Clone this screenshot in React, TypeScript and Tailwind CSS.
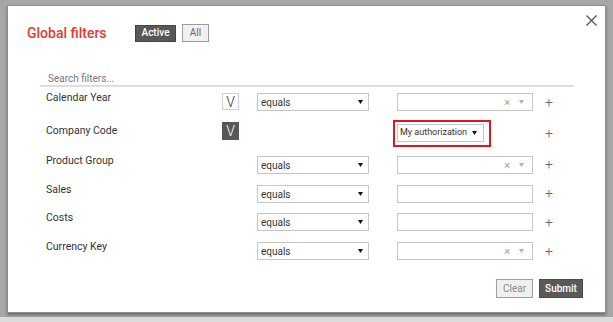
import React from 'react'

/**
 * Global filters dialog
 * Modal with a filter search box, one row per dimension and footer actions
 */

type Row = {
  label: string
  checkbox?: 'light' | 'dark'
  op: boolean
  value: 'combo' | 'text' | 'auth'
  height: string
  plusTop: string
}

const rows: Row[] = [
  { label: 'Calendar Year', checkbox: 'light', op: true, value: 'combo', height: 'h-[27px]', plusTop: 'mt-[2px]' },
  { label: 'Company Code', checkbox: 'dark', op: false, value: 'auth', height: 'h-[36px]', plusTop: 'mt-[6px]' },
  { label: 'Product Group', op: true, value: 'combo', height: 'h-[29px]', plusTop: 'mt-[1px]' },
  { label: 'Sales', op: true, value: 'text', height: 'h-[28px]', plusTop: 'mt-[1px]' },
  { label: 'Costs', op: true, value: 'text', height: 'h-[29px]', plusTop: 'mt-[2px]' },
  { label: 'Currency Key', op: true, value: 'combo', height: 'h-[18px]', plusTop: 'mt-[2px]' },
]

function Caret({ className }: { className?: string }) {
  return (
    <svg width="5" height="4" viewBox="0 0 5 4" className={className}>
      <path d="M0 0h5L2.5 4z" fill="currentColor" />
    </svg>
  )
}

function OpSelect() {
  return (
    <div className="w-[112px] h-[18px] border border-[#c6c6c6] bg-white flex items-center pl-[3px] pr-[5px]">
      <span className="text-[10px] text-[#333] flex-1">equals</span>
      <Caret className="text-[#111]" />
    </div>
  )
}

function ValueBox({ kind }: { kind: Row['value'] }) {
  if (kind === 'auth') {
    return (
      <div className="-ml-[4px] w-[98px] h-[27px] border-2 border-[#e3161b] pl-[2px] pt-[2px]">
        <div className="w-[87px] h-[18px] border border-[#c6c6c6] bg-white flex items-center pl-[2px] pr-[6px]">
          <span className="text-[9px] text-[#333] flex-1 whitespace-nowrap">My authorization</span>
          <Caret className="text-[#111]" />
        </div>
      </div>
    )
  }
  return (
    <div className="w-[136px] h-[18px] border border-[#c6c6c6] bg-white flex items-center justify-end pr-[8px] gap-[9px]">
      {kind === 'combo' && (
        <>
          <span className="text-[11px] leading-none text-[#a0a0a0]">×</span>
          <Caret className="text-[#b0b0b0]" />
        </>
      )}
    </div>
  )
}

export default function App() {
  return (
    <div className="w-[613px] h-[322px] flex flex-col bg-[#dcdcdc] font-['Roboto','Liberation_Sans',sans-serif]">
      <div className="bg-[#a7a7a7] pt-[5px] pl-[7px] pr-[7px] pb-[4px]">
        <div className="relative h-[308px] bg-white border border-[#8e8e8e] shadow-[0_2px_3px_rgba(0,0,0,0.35)]">
          {/* Close */}
          <svg width="11" height="11" viewBox="0 0 11 11" className="absolute top-[9px] right-[8px] text-[#555]">
            <path d="M0.5 0.5l10 10M10.5 0.5l-10 10" stroke="currentColor" strokeWidth="1.3" />
          </svg>

          {/* Header */}
          <div className="flex items-center mt-[18px] pl-[19px] h-[18px]">
            <h1 className="w-[108px] text-[14px] leading-[18px] font-medium text-[#e8392f]">Global filters</h1>
            <button className="w-[41px] h-[17px] bg-[#585858] border border-[#444] text-white text-[10px] font-medium leading-none">
              Active
            </button>
            <button className="ml-[6px] w-[27px] h-[18px] bg-[#f1f1f1] border border-[#9a9a9a] text-[#666] text-[10px] leading-none">
              All
            </button>
          </div>

          {/* Search */}
          <div className="mt-[29px] ml-[32px] w-[534px] border-b-2 border-[#dedede] h-[16px] flex items-center pl-[8px]">
            <span className="text-[10px] text-[#777]">Search filters...</span>
          </div>

          {/* Filter rows */}
          <div className="mt-[6px] pl-[38px] flex flex-col">
            {rows.map((r) => (
              <div key={r.label} className={`flex items-start ${r.height}`}>
                <div
                  className={`w-[176px] text-[10.5px] leading-[12px] text-[#333] ${
                    r.value === 'auth' ? 'mt-[5px]' : '-mt-px'
                  }`}
                >
                  {r.label}
                </div>
                <div className={`w-[35px] ${r.value === 'auth' ? 'mt-[2px]' : ''}`}>
                  {r.checkbox === 'light' && (
                    <div className="w-[17px] h-[17px] border border-[#d0d0d0] bg-white flex items-center justify-center text-[14px] leading-none text-[#333] font-light">
                      V
                    </div>
                  )}
                  {r.checkbox === 'dark' && (
                    <div className="w-[17px] h-[18px] bg-[#575757] flex items-center justify-center text-[14px] leading-none text-white font-light">
                      V
                    </div>
                  )}
                </div>
                <div className="w-[140px]">{r.op && <OpSelect />}</div>
                <div className="w-[136px]">
                  <ValueBox kind={r.value} />
                </div>
                <div className={`ml-[12px] text-[14px] leading-[14px] text-[#666] font-light ${r.plusTop}`}>+</div>
              </div>
            ))}
          </div>

          {/* Footer */}
          <div className="flex justify-end gap-[6px] pr-[22px] mt-[19px]">
            <button className="w-[37px] h-[19px] bg-[#efefef] border border-[#9d9d9d] text-[#8a8a8a] text-[10px] leading-none">
              Clear
            </button>
            <button className="w-[44px] h-[19px] bg-[#5a5a5a] border border-[#4a4a4a] text-white text-[10px] font-medium leading-none">
              Submit
            </button>
          </div>
        </div>
      </div>
      <div className="flex-1" />
    </div>
  )
}
